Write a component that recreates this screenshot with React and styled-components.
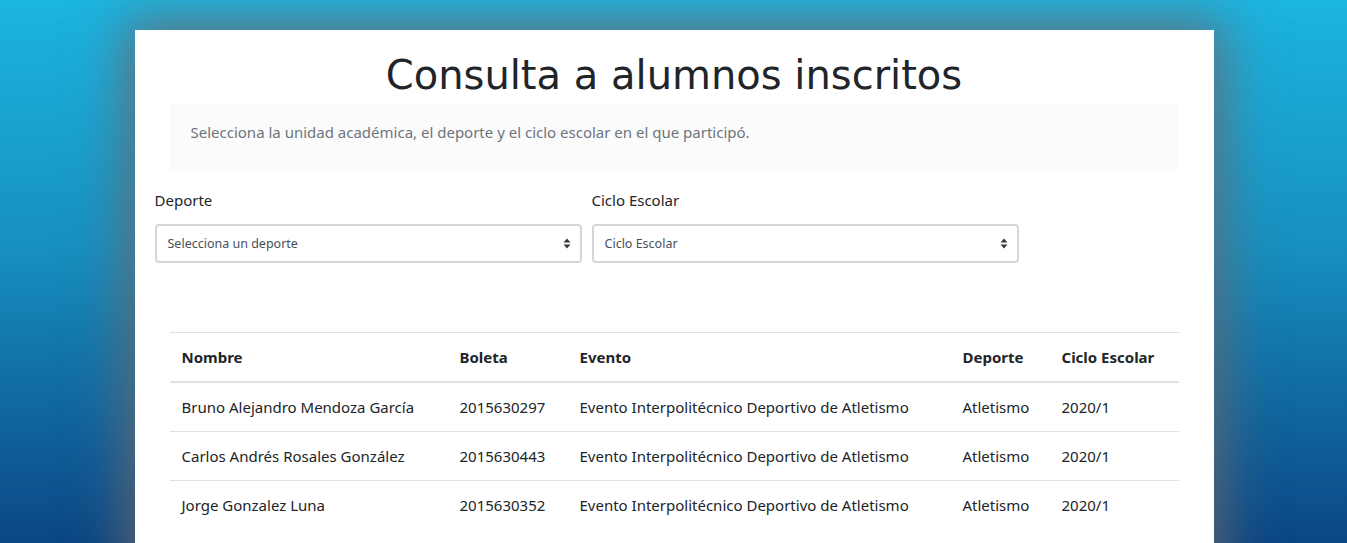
import React from "react";
import styled, { createGlobalStyle } from "styled-components";

const Global = createGlobalStyle`
  html, body { margin: 0; padding: 0; height: 100%; overflow: hidden; }
  body {
    background: linear-gradient(to bottom, #1cb5e1 0%, #1790c0 45%, #0b4684 100%);
    font-family: "Noto Sans", "Open Sans", sans-serif;
    color: #212529;
  }
  #root { height: 100%; }
`;

const Page = styled.div`
  height: 100%;
  padding-top: 30px;
  padding-left: 1px;
  box-sizing: border-box;
`;

const Card = styled.main`
  width: 1079px;
  margin: 0 auto;
  background: #fff;
  min-height: 600px;
  box-shadow: 0 0 48px 10px rgba(105, 105, 110, 0.85);
  padding: 20px 20px 40px;
  box-sizing: border-box;
`;

const Title = styled.h1`
  margin: 0;
  font-family: "DejaVu Sans", Verdana, sans-serif;
  font-weight: 400;
  font-size: 40px;
  line-height: 50px;
  text-align: center;
  color: #212529;
`;

const Notice = styled.div`
  margin: 3px 15px 0;
  height: 68px;
  box-sizing: border-box;
  background: #fbfbfb;
  padding: 17px 21px 0;
  line-height: 24px;
  font-size: 15px;
  color: #6c757d;
`;

const FormRow = styled.div`
  display: flex;
  gap: 10px;
  margin-top: 17px;
`;

const Field = styled.div`
  width: 427px;
  display: flex;
  flex-direction: column;
`;

const Label = styled.label`
  font-size: 15px;
  line-height: 24px;
  margin-bottom: 12px;
`;

const Select = styled.div`
  height: 39px;
  box-sizing: border-box;
  border: 2px solid #d3d6da;
  border-radius: 4px;
  display: flex;
  align-items: center;
  justify-content: space-between;
  padding: 0 9px 0 11px;
  font-size: 12.5px;
  color: #495057;
`;

const Arrows = () => (
  <svg width="8" height="11" viewBox="0 0 8 11">
    <path d="M4 0.5 L7.5 4.5 L0.5 4.5 Z M4 10.5 L7.5 6.5 L0.5 6.5 Z" fill="#343a40" />
  </svg>
);

const Table = styled.table`
  margin: 69px 15px 0;
  width: 1009px;
  border-collapse: collapse;
  table-layout: fixed;
  font-size: 15px;
`;

const Th = styled.th`
  text-align: left;
  font-weight: 700;
  padding: 12px;
  line-height: 24px;
  border-top: 1px solid #dee2e6;
  border-bottom: 2px solid #dee2e6;
`;

const Td = styled.td`
  padding: 12px;
  line-height: 24px;
  border-top: ${(p) => (p.$first ? "none" : "1px solid #dee2e6")};
  white-space: nowrap;
`;

const rows = [
  ["Bruno Alejandro Mendoza García", "2015630297"],
  ["Carlos Andrés Rosales González", "2015630443"],
  ["Jorge Gonzalez Luna", "2015630352"],
];

export default function App() {
  return (
    <>
      <Global />
      <Page>
        <Card>
          <Title>Consulta a alumnos inscritos</Title>
          <Notice>
            Selecciona la unidad académica, el deporte y el ciclo escolar en el que participó.
          </Notice>
          <FormRow>
            <Field>
              <Label>Deporte</Label>
              <Select>
                <span>Selecciona un deporte</span>
                <Arrows />
              </Select>
            </Field>
            <Field>
              <Label>Ciclo Escolar</Label>
              <Select>
                <span>Ciclo Escolar</span>
                <Arrows />
              </Select>
            </Field>
          </FormRow>
          <Table>
            <colgroup>
              <col style={{ width: 278 }} />
              <col style={{ width: 120 }} />
              <col style={{ width: 383 }} />
              <col style={{ width: 99 }} />
              <col style={{ width: 129 }} />
            </colgroup>
            <thead>
              <tr>
                <Th>Nombre</Th>
                <Th>Boleta</Th>
                <Th>Evento</Th>
                <Th>Deporte</Th>
                <Th>Ciclo Escolar</Th>
              </tr>
            </thead>
            <tbody>
              {rows.map((r, i) => (
                <tr key={r[1]}>
                  <Td $first={i === 0}>{r[0]}</Td>
                  <Td $first={i === 0}>{r[1]}</Td>
                  <Td $first={i === 0}>Evento Interpolitécnico Deportivo de Atletismo</Td>
                  <Td $first={i === 0}>Atletismo</Td>
                  <Td $first={i === 0}>2020/1</Td>
                </tr>
              ))}
            </tbody>
          </Table>
        </Card>
      </Page>
    </>
  );
}
